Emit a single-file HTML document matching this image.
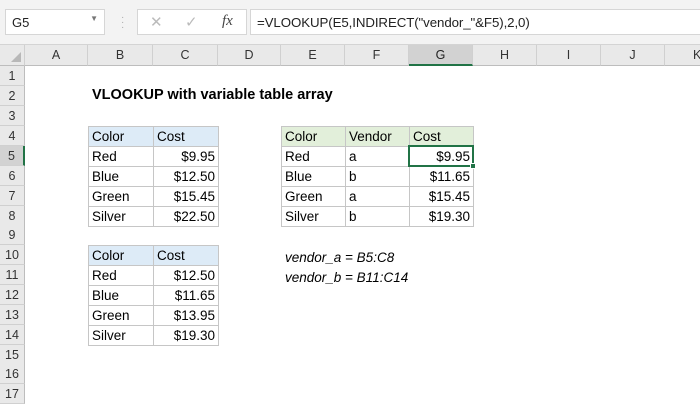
<!DOCTYPE html>
<html><head><meta charset="utf-8"><style>
*{margin:0;padding:0;box-sizing:border-box}
body{width:700px;height:400px;overflow:hidden;background:#fff;font-family:"Liberation Sans",sans-serif;position:relative;color:#000}
.top{position:absolute;left:0;top:0;width:700px;height:45px;background:#f3f3f3;border-bottom:1px solid #d4d4d4}
.nb{position:absolute;left:5px;top:9px;width:100px;height:26px;background:#fff;border:1px solid #d6d6d6;font-size:13px;padding:5px 6px;color:#222}
.fb{position:absolute;left:250px;top:9px;width:452px;height:26px;background:#fff;border:1px solid #d6d6d6;font-size:13.3px;padding:5px 6px;color:#222;letter-spacing:-0.1px}
.ib{position:absolute;left:137px;top:9px;width:110px;height:26px;background:#fff;border:1px solid #d6d6d6}
.ch{position:absolute;top:45px;height:21px;background:#e9e9e9;border-right:1px solid #d0d0d0;border-bottom:1px solid #bdbdbd;font-size:12.5px;text-align:center;line-height:20px;color:#333}
.rh{position:absolute;left:0;width:25px;height:20px;background:#e9e9e9;border-bottom:1px solid #d0d0d0;border-right:1px solid #bdbdbd;font-size:12.5px;text-align:center;line-height:20px;color:#333}
table{position:absolute;border-collapse:collapse;font-size:13.5px}
td{border:1px solid #c6c6c6;height:20px;padding:0 3px;line-height:18px;white-space:nowrap}
td.r{text-align:right}
.t{position:absolute;font-size:13.5px;white-space:nowrap}
</style></head><body>
<div class="top"></div>
<div class="nb">G5<span style="position:absolute;right:6px;top:4px;font-size:8px;color:#777">▼</span></div>
<div style="position:absolute;left:121px;top:15px;color:#aaa;font-size:10px;line-height:5px">·<br>·<br>·</div>
<div class="ib"><span style="position:absolute;left:12px;top:3px;color:#bbb;font-size:15px">✕</span><span style="position:absolute;left:47px;top:3px;color:#bbb;font-size:15px">✓</span><span style="position:absolute;left:84px;top:3px;font-family:'Liberation Serif',serif;font-style:italic;font-size:15px;color:#444">fx</span></div>
<div class="fb">=VLOOKUP(E5,INDIRECT("vendor_"&amp;F5),2,0)</div>

<div class="ch" style="left:0;width:25px"><span style="position:absolute;right:3px;bottom:3px;width:0;height:0;border-left:10px solid transparent;border-bottom:10px solid #b8b8b8"></span></div>
<div class="ch" style="left:25px;width:63px">A</div>
<div class="ch" style="left:88px;width:65px">B</div>
<div class="ch" style="left:153px;width:65px">C</div>
<div class="ch" style="left:218px;width:63px">D</div>
<div class="ch" style="left:281px;width:64px">E</div>
<div class="ch" style="left:345px;width:64px">F</div>
<div class="ch" style="left:409px;width:64px;background:#d2d2d2;border-bottom:2px solid #217346;color:#222">G</div>
<div class="ch" style="left:473px;width:64px">H</div>
<div class="ch" style="left:537px;width:64px">I</div>
<div class="ch" style="left:601px;width:64px">J</div>
<div class="ch" style="left:665px;width:40px;text-align:left;padding-left:28px">K</div>

<div class="rh" style="top:66px">1</div>
<div class="rh" style="top:86px">2</div>
<div class="rh" style="top:106px">3</div>
<div class="rh" style="top:126px">4</div>
<div class="rh" style="top:146px;background:#d2d2d2;border-right:2px solid #217346">5</div>
<div class="rh" style="top:166px">6</div>
<div class="rh" style="top:186px">7</div>
<div class="rh" style="top:206px">8</div>
<div class="rh" style="top:225px">9</div>
<div class="rh" style="top:245px">10</div>
<div class="rh" style="top:265px">11</div>
<div class="rh" style="top:285px">12</div>
<div class="rh" style="top:305px">13</div>
<div class="rh" style="top:325px">14</div>
<div class="rh" style="top:345px">15</div>
<div class="rh" style="top:364px">16</div>
<div class="rh" style="top:384px">17</div>

<div class="t" style="left:92px;top:87px;font-weight:bold;font-size:14.5px">VLOOKUP with variable table array</div>

<table style="left:88px;top:126px">
<tr style="background:#ddebf7"><td style="width:65px">Color</td><td style="width:65px">Cost</td></tr>
<tr><td>Red</td><td class="r">$9.95</td></tr>
<tr><td>Blue</td><td class="r">$12.50</td></tr>
<tr><td>Green</td><td class="r">$15.45</td></tr>
<tr><td>Silver</td><td class="r">$22.50</td></tr>
</table>

<table style="left:88px;top:245px">
<tr style="background:#ddebf7"><td style="width:65px">Color</td><td style="width:65px">Cost</td></tr>
<tr><td>Red</td><td class="r">$12.50</td></tr>
<tr><td>Blue</td><td class="r">$11.65</td></tr>
<tr><td>Green</td><td class="r">$13.95</td></tr>
<tr><td>Silver</td><td class="r">$19.30</td></tr>
</table>

<table style="left:281px;top:126px">
<tr style="background:#e2efda"><td style="width:64px">Color</td><td style="width:64px">Vendor</td><td style="width:64px">Cost</td></tr>
<tr><td>Red</td><td>a</td><td class="r">$9.95</td></tr>
<tr><td>Blue</td><td>b</td><td class="r">$11.65</td></tr>
<tr><td>Green</td><td>a</td><td class="r">$15.45</td></tr>
<tr><td>Silver</td><td>b</td><td class="r">$19.30</td></tr>
</table>
<div style="position:absolute;left:408px;top:145px;width:66px;height:22px;border:2px solid #217346"></div>
<div style="position:absolute;left:470px;top:163px;width:6px;height:6px;background:#217346;border:1px solid #fff"></div>

<div class="t" style="left:285px;top:250px;font-style:italic">vendor_a = B5:C8</div>
<div class="t" style="left:285px;top:270px;font-style:italic">vendor_b = B11:C14</div>
</body></html>
